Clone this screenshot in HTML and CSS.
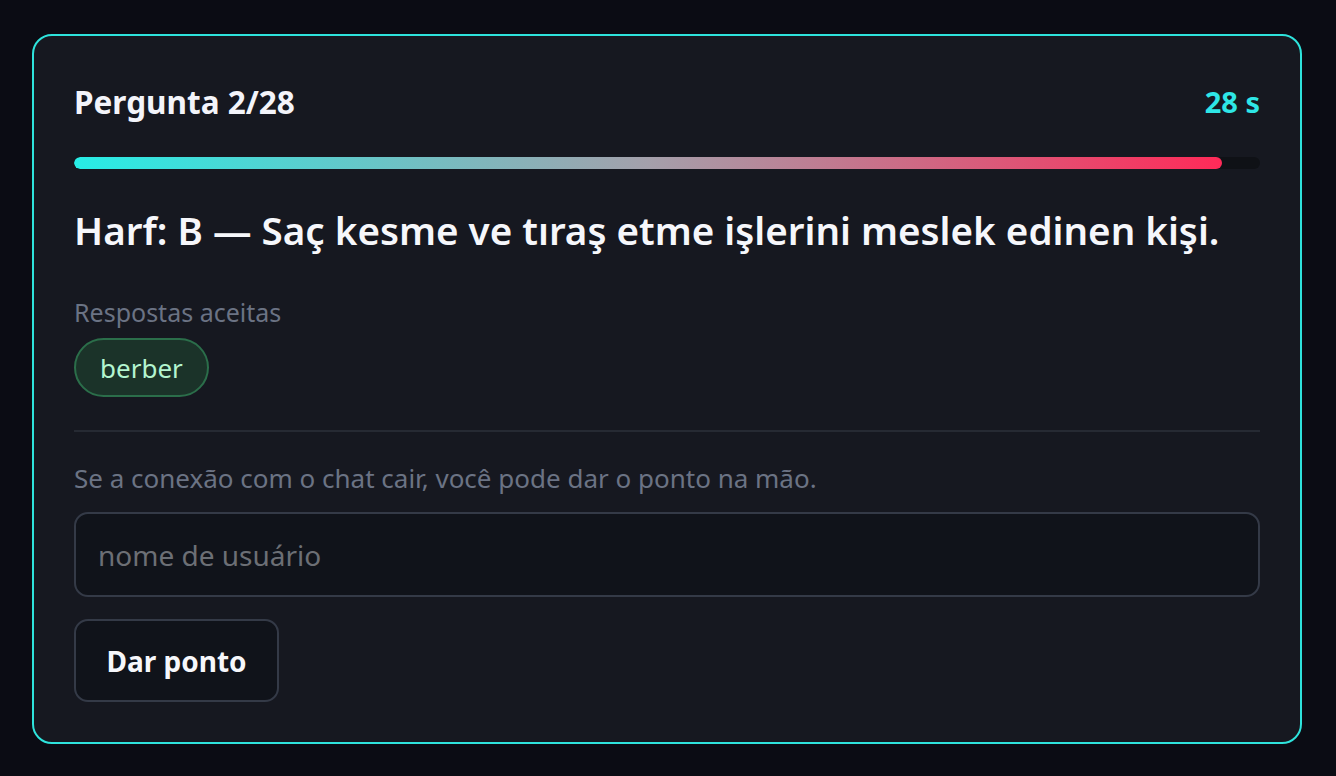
FILE: index.html
```html
<!DOCTYPE html>
<html lang="pt">
<head>
<meta charset="utf-8">
<title>Pergunta</title>
<link rel="stylesheet" href="styles.css">
</head>
<body>
<main class="page">
  <section class="card">
    <header class="card-head">
      <h2 class="q-count">Pergunta 2/28</h2>
      <span class="timer">28 s</span>
    </header>
    <div class="progress"><div class="progress-fill" style="width: 96.8%"></div></div>
    <h1 class="question">Harf: B — Saç kesme ve tıraş etme işlerini meslek edinen kişi.</h1>
    <div class="answers">
      <div class="label">Respostas aceitas</div>
      <div class="chips"><span class="chip">berber</span></div>
    </div>
    <hr class="divider">
    <p class="hint">Se a conexão com o chat cair, você pode dar o ponto na mão.</p>
    <input class="user-input" type="text" placeholder="nome de usuário">
    <div class="actions"><button class="btn" type="button">Dar ponto</button></div>
  </section>
</main>
</body>
</html>
```

FILE: styles.css
```css
* { box-sizing: border-box; }
html, body { margin: 0; padding: 0; }
body {
  background: #0b0c14;
  font-family: "Noto Sans", "Open Sans", sans-serif;
  color: #f3f4f8;
  width: 1336px;
  height: 776px;
  overflow: hidden;
}
.page { padding: 34px 34px 0 32px; }
.card {
  width: 1270px;
  height: 710px;
  border: 2px solid #2ee3dc;
  border-radius: 20px;
  background: #161820;
  padding: 40px 40px;
  display: flex;
  flex-direction: column;
}
.card-head {
  display: flex;
  justify-content: space-between;
  align-items: center;
  height: 51px;
}
.q-count {
  margin: 0;
  font-size: 31.5px;
  font-weight: 700;
  color: #f3f4fa;
}
.timer {
  font-size: 29px;
  font-weight: 700;
  color: #2ee6e6;
}
.progress {
  margin-top: 30px;
  height: 12px;
  border-radius: 6px;
  background: #0f1116;
  overflow: hidden;
}
.progress-fill {
  height: 100%;
  border-radius: 6px;
  background: linear-gradient(90deg, #27ede6 0%, #a4a0ab 50%, #ff2a58 100%);
}
.question {
  margin: 34px 0 0;
  font-size: 38.6px;
  font-weight: 600;
  line-height: 54px;
  color: #f6f7fb;
}
.answers { margin-top: 38px; }
.label {
  font-size: 25px;
  line-height: 34px;
  color: #6b7384;
}
.chips { margin-top: 9px; display: flex; gap: 8px; }
.chip {
  display: inline-flex;
  align-items: center;
  height: 59px;
  padding: 0 24px;
  border: 2px solid #2b6e4a;
  border-radius: 30px;
  background: #1b3329;
  color: #b3f5cf;
  font-size: 26px;
}
.divider {
  margin: 33px 0 0;
  border: 0;
  border-top: 2px solid #262a33;
}
.hint {
  margin: 29px 0 0;
  font-size: 26px;
  line-height: 34px;
  color: #6b7384;
}
.user-input {
  margin-top: 17px;
  width: 100%;
  height: 85px;
  border: 2px solid #343a47;
  border-radius: 14px;
  background: #10131a;
  padding: 0 22px;
  font-family: inherit;
  font-size: 28px;
  color: #e5e7eb;
  outline: none;
}
.user-input::placeholder { color: #6c6f75; }
.actions { margin-top: 22px; display: flex; }
.btn {
  height: 83px;
  width: 205px;
  border: 2px solid #343a47;
  border-radius: 14px;
  background: #10131a;
  color: #f6f7fb;
  font-family: inherit;
  font-size: 28px;
  font-weight: 700;
  cursor: pointer;
}
```
